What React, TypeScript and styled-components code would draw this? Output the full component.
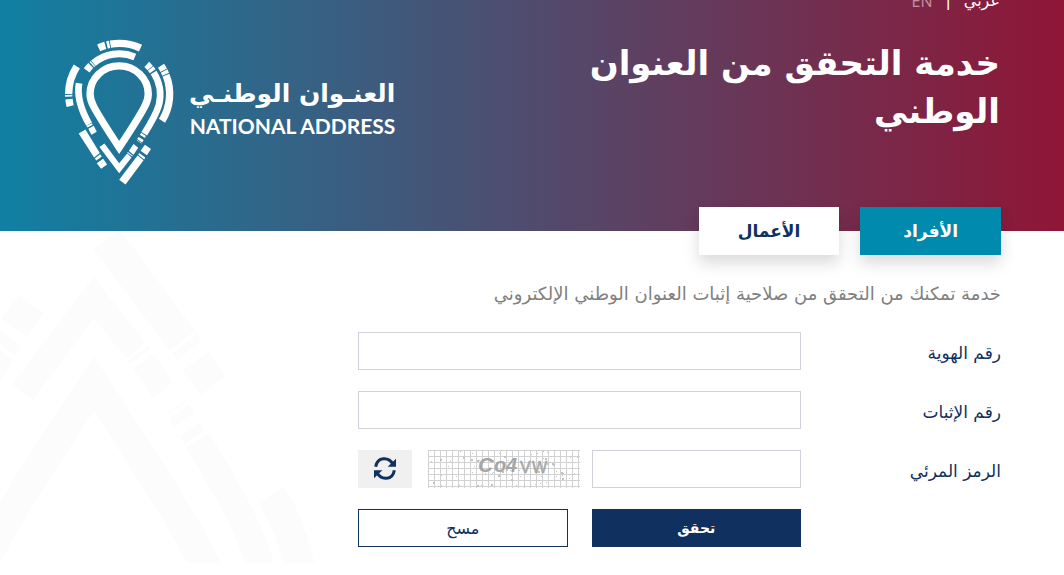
import React from "react";
import styled, { createGlobalStyle, css } from "styled-components";

const colors = {
  navy: "#10315f",
  teal: "#008aae",
  border: "#d0d1db",
  muted: "#808080",
  mark: "#fcfcfc",
};

const arabic = `"DejaVu Sans", "Noto Sans", sans-serif`;

const GlobalStyle = createGlobalStyle`
  *, *::before, *::after { box-sizing: border-box; }
  body { margin: 0; background: #fff; font-family: ${arabic}; color: ${colors.navy}; }
  button, input { font-family: inherit; }
`;

const Header = styled.header`
  height: 231px;
  padding: 0 64px;
  overflow: hidden;
  color: #fff;
  background: linear-gradient(to right, #1180a3 0%, #554769 54%, #8f1636 100%);
`;

const Languages = styled.nav`
  display: flex;
  gap: 13px;
  margin-top: -11px;
  font-size: 16px;
  line-height: 24px;
`;

const LanguageLink = styled.a<{ $dim?: boolean }>`
  color: #fff;
  text-decoration: none;
  opacity: ${(p) => (p.$dim ? 0.5 : 1)};
  font-family: ${(p) => (p.$dim ? `"Open Sans", sans-serif` : "inherit")};
`;

const Banner = styled.div`
  display: grid;
  grid-template-columns: 1fr 1fr;
  padding-top: 26px;
`;

const Title = styled.h1`
  margin: 0;
  font-size: 34px;
  line-height: 48px;
  font-weight: 700;
`;

const Brand = styled.a`
  display: flex;
  align-items: center;
  gap: 14px;
  justify-self: end;
  color: #fff;
  text-decoration: none;
`;

const BrandMark = styled.svg`
  width: 111px;
  height: 146px;
  flex: none;
`;

const BrandText = styled.span`
  display: flex;
  flex-direction: column;
  align-items: flex-start;
  padding-bottom: 8px;
  white-space: nowrap;
`;

const BrandArabic = styled.span`
  font-size: 25px;
  line-height: 36px;
  font-weight: 700;
`;

const BrandLatin = styled.span`
  direction: ltr;
  font-family: Lato, sans-serif;
  font-size: 21px;
  line-height: 28px;
  font-weight: 700;
`;

const Main = styled.main`
  display: flow-root;
  position: relative;
  padding: 0 63px 16px;
`;

const Backdrop = styled.div`
  position: absolute;
  inset: 0;
  overflow: hidden;
  pointer-events: none;
`;

const BackdropMark = styled.svg`
  position: absolute;
  top: -3px;
  left: -135px;
  width: 460px;
  height: 605px;
`;

const Tabs = styled.div`
  position: relative;
  display: flex;
  gap: 21px;
  margin-top: -24px;
`;

const Tab = styled.button<{ $active?: boolean }>`
  width: 15%;
  height: 48px;
  border: 0;
  padding: 0;
  font-size: 17px;
  font-weight: 700;
  color: ${(p) => (p.$active ? "#fff" : colors.navy)};
  background: ${(p) => (p.$active ? colors.teal : "#fff")};
  box-shadow: 0 8px 16px rgba(0, 0, 0, 0.15);
`;

const Intro = styled.p`
  position: relative;
  margin: 26px 0;
  font-size: 18px;
  line-height: 25px;
  color: ${colors.muted};
`;

const Form = styled.form`
  position: relative;
  display: flex;
  flex-direction: column;
  gap: 21px;
`;

const Row = styled.div`
  display: grid;
  grid-template-columns: 200fr 443fr 295fr;
  align-items: center;
`;

const Label = styled.label`
  padding-top: 4px;
  font-size: 17px;
  line-height: 24px;
`;

const Field = styled.div`
  grid-column: 2;
  display: flex;
  align-items: center;
  min-width: 0;
`;

const CaptchaField = styled(Field)`
  gap: 12px;
`;

const Actions = styled(Field)`
  gap: 24px;
`;

const TextInput = styled.input`
  flex: 1;
  min-width: 0;
  height: 38px;
  padding: 0 12px;
  border: 1px solid ${colors.border};
  border-radius: 0;
  background: #fff;
  font-size: 16px;
`;

const CaptchaImage = styled.svg`
  width: 152px;
  height: 38px;
  flex: none;
`;

const Refresh = styled.button`
  display: flex;
  align-items: center;
  justify-content: center;
  width: 54px;
  height: 38px;
  flex: none;
  border: 0;
  padding: 0 0 2px;
  margin-right: 4px;
  background: #f0f0f0;
  color: ${colors.navy};
`;

const ActionButton = styled.button<{ $primary?: boolean }>`
  flex: 1;
  height: 38px;
  padding: 0;
  border: 1px solid ${colors.navy};
  ${(p) =>
    p.$primary
      ? css`
          background: ${colors.navy};
          color: #fff;
          font-size: 14px;
          font-weight: 700;
        `
      : css`
          background: #fff;
          color: ${colors.navy};
          font-size: 16px;
        `}
`;

const CENTER = { x: 209, y: 190 };

/** Ring segment around the pin; angles in degrees, clockwise from the top. */
function Segment({ r, from, to, width = 22 }: { r: number; from: number; to: number; width?: number }) {
  const at = (deg: number) => {
    const a = (deg * Math.PI) / 180;
    return `${(CENTER.x + r * Math.sin(a)).toFixed(1)} ${(CENTER.y - r * Math.cos(a)).toFixed(1)}`;
  };
  return <path d={`M${at(from)}A${r} ${r} 0 0 1 ${at(to)}`} strokeWidth={width} />;
}

function PinMark({ color }: { color: string }) {
  return (
    <g>
      <g fill="none" stroke={color} strokeMiterlimit={10}>
        <path
          strokeWidth={22}
          d="M209 350Q152 264 133 228Q122 208 122 190A87 84 0 0 1 296 190Q296 208 285 228Q266 264 209 350Z"
        />
        <Segment r={151} from={-24} to={-16} />
        <Segment r={151} from={-14} to={-11} />
        <Segment r={151} from={-10} to={25} />
        <Segment r={151} from={56} to={62} />
        <Segment r={151} from={63} to={67} />
        <Segment r={151} from={68} to={122} />
        <Segment r={151} from={-90} to={-57} />
        <Segment r={151} from={-93} to={-91} />
        <Segment r={151} from={-104} to={-96} />
        <Segment r={120} from={-54} to={-45} width={21} />
        <Segment r={120} from={-43} to={-41} width={21} />
        <Segment r={120} from={-40} to={23} width={21} />
        <Segment r={121} from={43} to={50} width={21} />
        <Segment r={121} from={51} to={56} width={21} />
        <path strokeWidth={20} d="M312 126C336 164 334 198 328 223Q318 255 284 309" />
        <path strokeWidth={20} d="M89 158C82 198 95 238 119 280" />
      </g>
      <g fill={color}>
        <path d="M228 461L282 388L264 374L209 447Z" />
        <path d="M284 386L287 380L269 367L266 372Z" />
        <path d="M292 373L304 355L286 342L273 360Z" />
        <path d="M150 349L209 427L246 380L233 368L209 397L165 338Z" />
        <path d="M248 377L250 375L235 364L233 366Z" />
        <path d="M252 372L266 351L252 340L238 361Z" />
        <path d="M275 338L276 337L262 327L261 328Z" />
        <path d="M278 335L282 328L267 319L263 325Z" />
        <path d="M286 322L289 316L275 306L271 312Z" />
        <path d="M155 414L173 401L161 384L142 397Z" />
        <path d="M141 389L157 377L152 370L136 383Z" />
        <path d="M88 308L108 296L151 367L134 380Z" />
        <path d="M111 285L127 278L130 282L114 290Z" />
        <path d="M117 294L133 285L142 303L126 312Z" />
      </g>
    </g>
  );
}

function RefreshIcon() {
  return (
    <svg width="22" height="23" viewBox="0 0 66 68" aria-hidden="true">
      {[0, 180].map((turn) => (
        <g key={turn} transform={`rotate(${turn} 33 34)`}>
          <path d="M5 29C10 -2 44 -2 57 21" fill="none" stroke="currentColor" strokeWidth="9" />
          <path d="M66 5V29H41Z" fill="currentColor" />
        </g>
      ))}
    </svg>
  );
}

const hash = (n: number) => {
  const v = Math.sin(n * 127.1) * 43758.5453;
  return v - Math.floor(v);
};

const specks = Array.from({ length: 80 }, (_, i) => ({
  x: Math.floor(hash(i + 1) * 151),
  y: Math.floor(hash(i + 301) * 37),
  size: i % 4 === 0 ? 2 : 1,
}));

function Captcha() {
  return (
    <CaptchaImage viewBox="0 0 152 38" role="img" aria-label="Co4VW">
      <rect width="152" height="38" fill="#fff" />
      <g stroke="#d2d2d2" strokeWidth="1">
        {Array.from({ length: 26 }, (_, i) => (
          <path key={i} d={`M${i * 6 + 0.5} 0V38`} />
        ))}
        {Array.from({ length: 7 }, (_, i) => (
          <path key={i} d={`M0 ${i * 6 + 0.5}H152`} />
        ))}
      </g>
      <g fill="#c2c2c2">
        {specks.map((s, i) => (
          <rect key={i} x={s.x} y={s.y} width={s.size} height={s.size} />
        ))}
      </g>
      <g fill="#a6a6a6" fontFamily="Liberation Sans, sans-serif" fontWeight="700" direction="ltr">
        <text x="50" y="22" fontSize="21" fontStyle="italic">C</text>
        <text x="66" y="22" fontSize="20" fontStyle="italic">o</text>
        <text x="78" y="22" fontSize="20" fontStyle="italic">4</text>
        <text x="92" y="23" fontSize="16" fontWeight="400" stroke="#a6a6a6" strokeWidth="0.5">V</text>
        <text x="104" y="23" fontSize="16" fontWeight="400" stroke="#a6a6a6" strokeWidth="0.5">W</text>
      </g>
    </CaptchaImage>
  );
}

export default function App() {
  return (
    <div dir="rtl" lang="ar">
      <GlobalStyle />
      <Header>
        <Languages aria-label="اللغة">
          <LanguageLink href="#ar">عربي</LanguageLink>
          <span>|</span>
          <LanguageLink href="#en" $dim>EN</LanguageLink>
        </Languages>
        <Banner>
          <Title>خدمة التحقق من العنوان الوطني</Title>
          <Brand href="#home">
            <BrandText>
              <BrandArabic>العنـوان الوطنـي</BrandArabic>
              <BrandLatin>NATIONAL ADDRESS</BrandLatin>
            </BrandText>
            <BrandMark viewBox="44 26 332 436" aria-hidden="true">
              <PinMark color="#fff" />
            </BrandMark>
          </Brand>
        </Banner>
      </Header>
      <Main>
        <Backdrop>
          <BackdropMark viewBox="44 26 332 436" aria-hidden="true">
            <g transform="translate(0 488) scale(1 -1)">
              <PinMark color={colors.mark} />
            </g>
          </BackdropMark>
        </Backdrop>
        <Tabs>
          <Tab type="button" $active>الأفراد</Tab>
          <Tab type="button">الأعمال</Tab>
        </Tabs>
        <Intro>خدمة تمكنك من التحقق من صلاحية إثبات العنوان الوطني الإلكتروني</Intro>
        <Form onSubmit={(e) => e.preventDefault()}>
          <Row>
            <Label htmlFor="identity">رقم الهوية</Label>
            <Field>
              <TextInput id="identity" type="text" />
            </Field>
          </Row>
          <Row>
            <Label htmlFor="proof">رقم الإثبات</Label>
            <Field>
              <TextInput id="proof" type="text" />
            </Field>
          </Row>
          <Row>
            <Label htmlFor="captcha">الرمز المرئي</Label>
            <CaptchaField>
              <TextInput id="captcha" type="text" autoComplete="off" />
              <Captcha />
              <Refresh type="button" aria-label="تحديث الرمز">
                <RefreshIcon />
              </Refresh>
            </CaptchaField>
          </Row>
          <Row>
            <Actions>
              <ActionButton type="submit" $primary>تحقق</ActionButton>
              <ActionButton type="reset">مسح</ActionButton>
            </Actions>
          </Row>
        </Form>
      </Main>
    </div>
  );
}
